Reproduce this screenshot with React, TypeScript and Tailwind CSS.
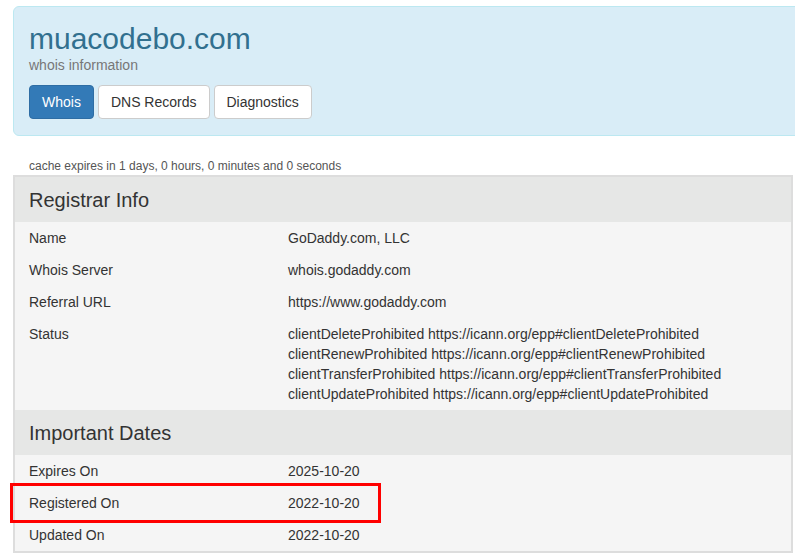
import React from "react";

const Row = ({ label, children, boxed }: { label: string; children: React.ReactNode; boxed?: boolean }) => (
  <div className="relative flex bg-[#f5f5f5] py-[6px] text-[14px] leading-[20px] text-[#333]">
    <div className="w-[273px] shrink-0 pl-[14px]">{label}</div>
    <div>{children}</div>
    {boxed && (
      <div className="absolute left-[-5px] top-[-4px] z-10 h-[40px] w-[371px] border-[3px] border-[#ff0000]" />
    )}
  </div>
);

const Header = ({ title }: { title: string }) => (
  <div className="flex h-[45px] items-center bg-[#e6e7e6] pl-[14px] text-[20px] text-[#333]">{title}</div>
);

export default function App() {
  return (
    <div className="min-h-[554px] w-[795px] overflow-hidden bg-white pt-[6px] pl-[13px]" style={{ fontFamily: '"Liberation Sans", Arial, sans-serif' }}>
      <div className="w-[800px] rounded-l-[6px] border border-[#bce8f1] bg-[#d9edf7] pl-[15px] pt-[16px] pb-[16px]">
        <div className="text-[30px] leading-[32px] text-[#31708f]">muacodebo.com</div>
        <div className="text-[14px] leading-[20px] text-[#777]">whois information</div>
        <div className="mt-[10px] flex gap-[4px]">
          <button className="h-[34px] rounded-[4px] border border-[#2e6da4] bg-[#337ab7] px-[12px] text-[14px] text-white">Whois</button>
          <button className="h-[34px] rounded-[4px] border border-[#ccc] bg-white px-[12px] text-[14px] text-[#333]">DNS Records</button>
          <button className="h-[34px] rounded-[4px] border border-[#ccc] bg-white px-[12px] text-[14px] text-[#333]">Diagnostics</button>
        </div>
      </div>
      <div className="mt-[22px] pl-[16px] text-[12px] leading-[17px] text-[#555]">cache expires in 1 days, 0 hours, 0 minutes and 0 seconds</div>
      <div className="w-[780px] border-2 border-[#ddd]">
        <Header title="Registrar Info" />
        <Row label="Name">GoDaddy.com, LLC</Row>
        <Row label="Whois Server">whois.godaddy.com</Row>
        <Row label="Referral URL">https://www.godaddy.com</Row>
        <Row label="Status">
          <div>clientDeleteProhibited https://icann.org/epp#clientDeleteProhibited</div>
          <div>clientRenewProhibited https://icann.org/epp#clientRenewProhibited</div>
          <div>clientTransferProhibited https://icann.org/epp#clientTransferProhibited</div>
          <div>clientUpdateProhibited https://icann.org/epp#clientUpdateProhibited</div>
        </Row>
        <Header title="Important Dates" />
        <Row label="Expires On">2025-10-20</Row>
        <Row label="Registered On" boxed>2022-10-20</Row>
        <Row label="Updated On">2022-10-20</Row>
      </div>
    </div>
  );
}
